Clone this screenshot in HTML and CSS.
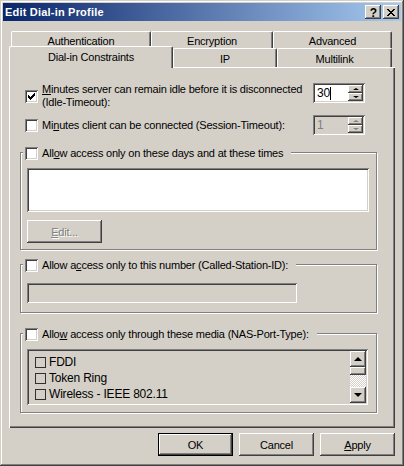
FILE: index.html
```html
<!DOCTYPE html>
<html lang="en">
<head>
  <meta charset="UTF-8">
  <title>Edit Dial-in Profile</title>
  <link rel="stylesheet" href="styles.css">
</head>
<body>

  <div class="window">
    <div class="titlebar">
      <span class="title">Edit Dial-in Profile</span>
      <div class="caption-buttons">
        <span class="cap-btn help">?</span>
        <span class="cap-btn">
          <svg width="8" height="7" viewBox="0 0 8 7" shape-rendering="crispEdges">
            <path d="M0 0h2v1h-2zM6 0h2v1h-2zM1 1h2v1h-2zM5 1h2v1h-2zM2 2h4v1h-4zM3 3h2v1h-2zM2 4h4v1h-4zM1 5h2v1h-2zM5 5h2v1h-2zM0 6h2v1h-2zM6 6h2v1h-2z" fill="#000"/>
          </svg>
        </span>
      </div>
    </div>

    <div class="content">
      <div class="tab-row back">
        <div class="tab tab-auth">Authentication</div>
        <div class="tab tab-enc">Encryption</div>
        <div class="tab tab-adv">Advanced</div>
      </div>
      <div class="tab-row front">
        <div class="tab tab-dial active">Dial-in Constraints</div>
        <div class="tab tab-ip">IP</div>
        <div class="tab tab-multi">Multilink</div>
      </div>

      <div class="panel">
        <div class="option-row">
          <span class="check">
            <svg width="7" height="7" viewBox="0 0 7 7" shape-rendering="crispEdges">
              <path d="M6 0h1v3h-1zM5 1h1v3h-1zM4 2h1v3h-1zM0 2h1v3h-1zM1 3h1v3h-1zM2 4h1v3h-1zM3 3h1v3h-1z" fill="#000"/>
            </svg>
          </span>
          <span class="option-label"><u>M</u>inutes server can remain idle before it is disconnected<br>(Idle-Timeout):</span>
          <div class="spin top">
            <span class="spin-value">30<span class="caret"></span></span>
            <span class="spin-btns">
              <span class="spin-btn"><i class="arrow up"></i></span>
              <span class="spin-btn"><i class="arrow down"></i></span>
            </span>
          </div>
        </div>

        <div class="option-row second">
          <span class="check"></span>
          <span class="option-label">Mi<u>n</u>utes client can be connected (Session-Timeout):</span>
          <div class="spin disabled">
            <span class="spin-value">1</span>
            <span class="spin-btns">
              <span class="spin-btn"><i class="arrow up"></i></span>
              <span class="spin-btn"><i class="arrow down"></i></span>
            </span>
          </div>
        </div>

        <div class="group group-days">
          <div class="group-title">
            <span class="check"></span>
            <span class="option-label">All<u>o</u>w access only on these days and at these times</span>
          </div>
          <div class="time-list"></div>
          <div class="btn disabled edit-btn"><span><u>E</u>dit...</span></div>
        </div>

        <div class="group group-number">
          <div class="group-title">
            <span class="check"></span>
            <span class="option-label">Allow a<u>c</u>cess only to this number (Called-Station-ID):</span>
          </div>
          <div class="text-input disabled"></div>
        </div>

        <div class="group group-media">
          <div class="group-title">
            <span class="check"></span>
            <span class="option-label">Allo<u>w</u> access only through these media (NAS-Port-Type):</span>
          </div>
          <div class="listbox">
            <div class="list-items">
              <div class="list-item"><span class="mini-check"></span>FDDI</div>
              <div class="list-item"><span class="mini-check"></span>Token Ring</div>
              <div class="list-item"><span class="mini-check"></span>Wireless - IEEE 802.11</div>
            </div>
            <div class="scrollbar">
              <span class="scroll-btn"><i class="arrow big up"></i></span>
              <span class="scroll-thumb"></span>
              <span class="scroll-track"></span>
              <span class="scroll-btn"><i class="arrow big down"></i></span>
            </div>
          </div>
        </div>
      </div>

      <div class="dialog-buttons">
        <div class="btn default">OK</div>
        <div class="btn">Cancel</div>
        <div class="btn"><span><u>A</u>pply</span></div>
      </div>
    </div>
  </div>

</body>
</html>
```

FILE: styles.css
```css
* {
  box-sizing: border-box;
}

body {
  margin: 0;
  font-family: "Liberation Sans", Arial, sans-serif;
  font-size: 11px;
  letter-spacing: -0.2px;
  color: #000;
  background-color: #d4d0c8;
}

u {
  text-decoration: underline;
  text-underline-offset: 1px;
}

.window {
  width: 404px;
  height: 466px;
  padding: 3px;
  background-color: #d4d0c8;
  box-shadow: inset -1px -1px 0 #404040, inset 1px 1px 0 #d4d0c8,
              inset -2px -2px 0 #808080, inset 2px 2px 0 #fff;
}

/* title bar */

.titlebar {
  height: 18px;
  display: flex;
  align-items: center;
  justify-content: space-between;
  padding: 0 2px 0 2px;
  background: linear-gradient(to right, #0a246a, #a6caf0);
  color: #fff;
  font-weight: bold;
  letter-spacing: 0.2px;
}

.caption-buttons {
  display: flex;
  gap: 2px;
}

.cap-btn {
  width: 16px;
  height: 14px;
  display: flex;
  align-items: center;
  justify-content: center;
  background-color: #d4d0c8;
  color: #000;
  box-shadow: inset -1px -1px 0 #404040, inset 1px 1px 0 #fff,
              inset -2px -2px 0 #808080;
}

.cap-btn.help {
  font-size: 12px;
  padding-top: 1px;
  padding-left: 1px;
}

/* tabs */

.content {
  padding: 10px 6px 0 6px;
}

.tab-row {
  display: flex;
}

.tab-row.back {
  height: 17px;
  padding-left: 2px;
}

.tab-row.front {
  height: 19px;
  align-items: flex-end;
}

.tab {
  height: 100%;
  display: flex;
  align-items: center;
  justify-content: center;
  padding-top: 2px;
  background-color: #d4d0c8;
  border-top: 1px solid #fff;
  border-left: 1px solid #fff;
  border-right: 1px solid #404040;
  border-top-left-radius: 2px;
  border-top-right-radius: 2px;
  box-shadow: inset -1px 0 0 #808080;
}

.tab-auth { width: 140px; }
.tab-enc { width: 122px; }
.tab-adv { width: 119px; }
.tab-dial { width: 164px; }
.tab-ip { width: 104px; }
.tab-multi { width: 115px; }

.tab.active {
  height: 22px;
  margin-bottom: -1px;
  padding-top: 0;
  padding-bottom: 1px;
  position: relative;
  z-index: 1;
}

.panel {
  height: 361px;
  padding: 16px 18px 0 11px;
  box-shadow: inset 1px 1px 0 #fff, inset -1px -1px 0 #404040,
              inset -2px -2px 0 #808080;
}

/* option rows */

.option-row {
  display: flex;
  align-items: center;
  padding: 0 12px 0 5px;
}

.option-row.second {
  margin-top: 6px;
}

.option-label {
  margin-left: 4px;
  line-height: 13px;
  white-space: nowrap;
}

.check {
  width: 13px;
  height: 13px;
  flex: none;
  display: flex;
  padding: 3px;
  background-color: #fff;
  box-shadow: inset 1px 1px 0 #808080, inset -1px -1px 0 #fff,
              inset 2px 2px 0 #404040, inset -2px -2px 0 #d4d0c8;
}

.spin {
  width: 52px;
  height: 20px;
  margin-left: auto;
  display: flex;
  padding: 2px;
  background-color: #fff;
  box-shadow: inset 1px 1px 0 #808080, inset -1px -1px 0 #fff,
              inset 2px 2px 0 #404040, inset -2px -2px 0 #d4d0c8;
}

.spin.top {
  align-self: flex-start;
}

.spin-value {
  flex: 1;
  display: flex;
  align-items: center;
  padding-left: 2px;
  font-size: 12px;
}

.caret {
  width: 1px;
  height: 13px;
  background-color: #000;
}

.spin.disabled {
  background-color: #d4d0c8;
  color: #808080;
}

.spin-btns {
  width: 15px;
  display: flex;
  flex-direction: column;
}

.spin-btn {
  flex: 1;
  display: flex;
  align-items: center;
  justify-content: center;
  background-color: #d4d0c8;
  box-shadow: inset -1px -1px 0 #404040, inset 1px 1px 0 #fff,
              inset -2px -2px 0 #808080;
}

.arrow {
  width: 0;
  height: 0;
  border-left: 3px solid transparent;
  border-right: 3px solid transparent;
}

.arrow.up {
  border-bottom: 2px solid #000;
}

.arrow.down {
  border-top: 2px solid #000;
}

.spin.disabled .arrow.up {
  border-bottom-color: #808080;
}

.spin.disabled .arrow.down {
  border-top-color: #808080;
}

.arrow.big {
  border-left-width: 4px;
  border-right-width: 4px;
}

.arrow.big.up {
  border-bottom-width: 4px;
}

.arrow.big.down {
  border-top-width: 4px;
}

/* group boxes */

.group {
  border: 1px solid #808080;
  box-shadow: 1px 1px 0 #fff, inset 1px 1px 0 #fff;
  padding: 0 7px 0 6px;
}

.group-days {
  margin-top: 17px;
  padding-bottom: 6px;
}

.group-number {
  margin-top: 14px;
  padding-bottom: 9px;
}

.group-media {
  margin-top: 20px;
  padding-bottom: 7px;
}

.group-title {
  display: flex;
  align-items: center;
  width: fit-content;
  height: 13px;
  margin: -6px 0 0 -4px;
  padding: 0 8px 0 2px;
  background-color: #d4d0c8;
}

.time-list {
  height: 44px;
  margin-top: 8px;
  background-color: #fff;
  box-shadow: inset 1px 1px 0 #808080, inset -1px -1px 0 #fff,
              inset 2px 2px 0 #404040, inset -2px -2px 0 #d4d0c8;
}

.text-input {
  width: 270px;
  height: 20px;
  margin-top: 11px;
  background-color: #d4d0c8;
  box-shadow: inset 1px 1px 0 #808080, inset -1px -1px 0 #fff,
              inset 2px 2px 0 #404040, inset -2px -2px 0 #d4d0c8;
}

.listbox {
  height: 56px;
  margin-top: 8px;
  margin-right: 1px;
  display: flex;
  padding: 2px;
  background-color: #d4d0c8;
  box-shadow: inset 1px 1px 0 #808080, inset -1px -1px 0 #fff,
              inset 2px 2px 0 #404040, inset -2px -2px 0 #d4d0c8;
}

.list-items {
  flex: 1;
  padding: 3px 0 0 6px;
}

.list-item {
  height: 16px;
  display: flex;
  align-items: center;
  font-size: 12px;
}

.mini-check {
  width: 11px;
  height: 11px;
  margin-right: 3px;
  border: 1px solid #303030;
}

.scrollbar {
  width: 16px;
  display: flex;
  flex-direction: column;
}

.scroll-btn {
  height: 16px;
  display: flex;
  align-items: center;
  justify-content: center;
  background-color: #d4d0c8;
  box-shadow: inset -1px -1px 0 #404040, inset 1px 1px 0 #fff,
              inset -2px -2px 0 #808080;
}

.scroll-thumb {
  height: 8px;
  background-color: #d4d0c8;
  box-shadow: inset -1px -1px 0 #404040, inset 1px 1px 0 #fff,
              inset -2px -2px 0 #808080;
}

.scroll-track {
  flex: 1;
  background-image: conic-gradient(#fff 25%, #d4d0c8 0 50%, #fff 0 75%, #d4d0c8 0);
  background-size: 2px 2px;
}

/* push buttons */

.btn {
  width: 75px;
  height: 23px;
  display: flex;
  align-items: center;
  justify-content: center;
  background-color: #d4d0c8;
  box-shadow: inset -1px -1px 0 #404040, inset 1px 1px 0 #fff,
              inset -2px -2px 0 #808080;
}

.btn.default {
  border: 1px solid #000;
}

.btn.disabled {
  color: #808080;
  text-shadow: 1px 1px 0 #fff;
}

.edit-btn {
  margin-top: 8px;
}

.dialog-buttons {
  display: flex;
  justify-content: flex-end;
  gap: 6px;
  margin-top: 5px;
}
```
